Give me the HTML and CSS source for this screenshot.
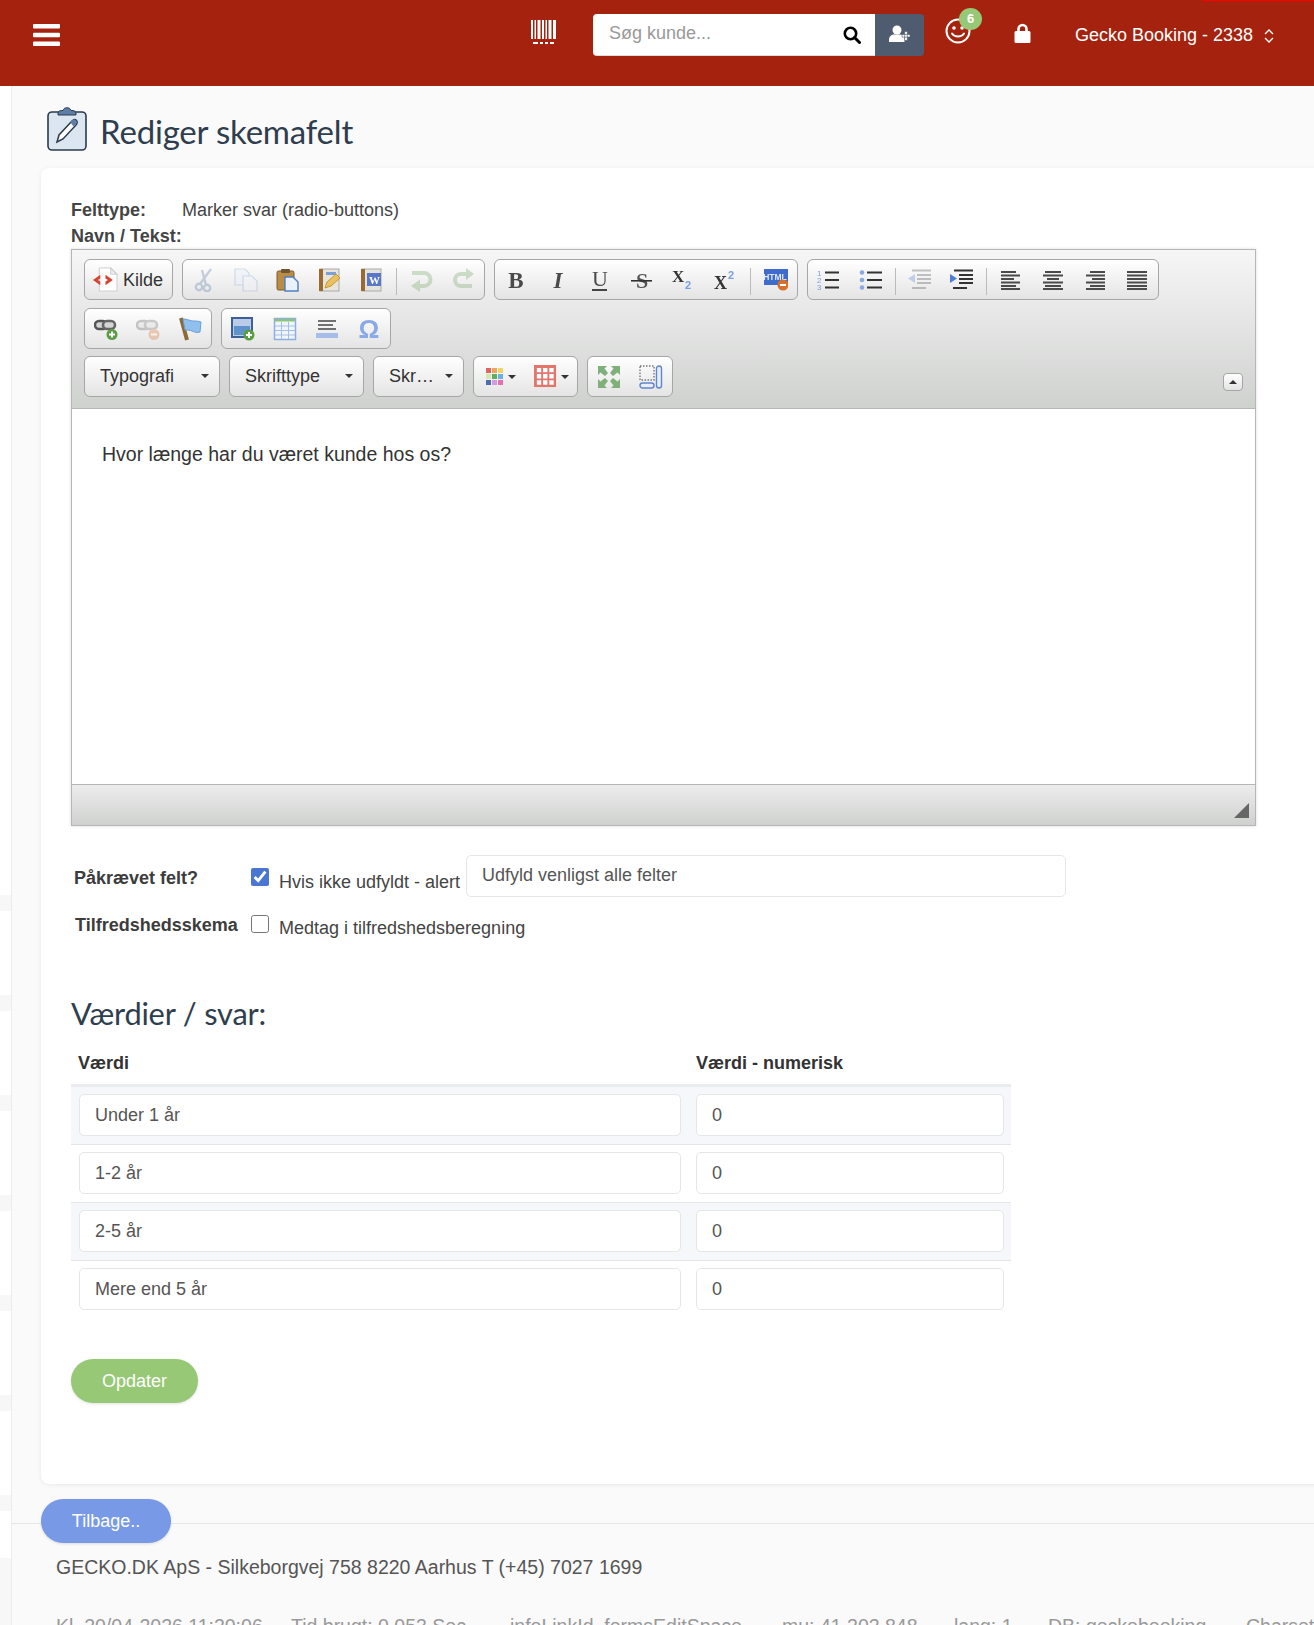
FILE: index.html
```html
<!DOCTYPE html>
<html lang="da">
<head>
<meta charset="utf-8">
<title>Rediger skemafelt</title>
<link rel="stylesheet" href="styles.css">
</head>
<body>
<svg class="sprite" xmlns="http://www.w3.org/2000/svg">
  <symbol id="source" viewBox="0 0 24 24"><path d="M6 1h11l6 6v16H6z" fill="#fff" stroke="#cfcfcf"/><path d="M17 1v6h6z" fill="#eee" stroke="#cfcfcf"/><path d="M7 7.500 0 12.500l7 5v-3.600L4.600 12.500 7 11z" fill="#d8432f"/><path d="M12 7.500l7 5-7 5v-3.600l2.400-1.400-2.400-1.500z" fill="#d8432f"/></symbol>
  <symbol id="cut" viewBox="0 0 24 24"><g fill="none" stroke="#56789f" stroke-width="2.400"><circle cx="7" cy="19" r="3.200"/><circle cx="15" cy="20" r="3.200"/><path d="M8 16 19 1M14 17 10 2"/></g></symbol>
  <symbol id="copy" viewBox="0 0 24 24"><path d="M1 1h10l4 4v12H1z" fill="#e6eefb" stroke="#7f9fd6" stroke-width="1.200"/><path d="M9 8h9l5 5v10H9z" fill="#eef4fd" stroke="#7f9fd6" stroke-width="1.200"/></symbol>
  <symbol id="paste" viewBox="0 0 24 24"><rect x="1" y="3" width="17" height="19" rx="1.500" fill="#b98d45" stroke="#7c5c28"/><rect x="5" y="1" width="9" height="4" rx="1" fill="#6f5630"/><path d="M9 9h8l5 5v9H9z" fill="#eaf1fb" stroke="#4f7cc4" stroke-width="1.400"/></symbol>
  <symbol id="pastetext" viewBox="0 0 24 24"><rect x="2" y="1" width="19" height="22" fill="#e8e4da" stroke="#aaa"/><rect x="1" y="1" width="4" height="22" fill="#9a6a32"/><path d="M8 4h10v3H8z" fill="#7da0d8"/><path d="M7 20 9 14l9-8 4 4-9 8z" fill="#e9c063" stroke="#c99a2a"/></symbol>
  <symbol id="pasteword" viewBox="0 0 24 24"><rect x="2" y="1" width="19" height="22" fill="#e4e2dc" stroke="#aaa"/><rect x="1" y="1" width="4" height="22" fill="#9a6a32"/><rect x="7" y="5" width="14" height="13" fill="#5a78c8"/><text x="9" y="15.500" font-family="Liberation Serif" font-weight="700" font-size="11" fill="#fff">W</text></symbol>
  <symbol id="undo" viewBox="0 0 24 24"><path d="M3 5h12a6.500 6.500 0 0 1 0 13h-5" fill="none" stroke="#6da35b" stroke-width="4"/><path d="M11 11.500 2 18l9 6z" fill="#6da35b"/></symbol>
  <symbol id="redo" viewBox="0 0 24 24"><path d="M21 6H10a6 6 0 0 0 0 12h11" fill="none" stroke="#6da35b" stroke-width="4"/><path d="M15 0l8 6-8 6z" fill="#6da35b"/></symbol>
  <symbol id="bold" viewBox="0 0 24 24"><text x="12" y="20" text-anchor="middle" font-family="Liberation Serif" font-weight="700" font-size="23" fill="#4a4a4a">B</text></symbol>
  <symbol id="italic" viewBox="0 0 24 24"><text x="12" y="20" text-anchor="middle" font-family="Liberation Serif" font-weight="700" font-style="italic" font-size="23" fill="#4a4a4a">I</text></symbol>
  <symbol id="underline" viewBox="0 0 24 24"><text x="12" y="18" text-anchor="middle" font-family="Liberation Serif" font-size="22" fill="#4a4a4a">U</text><rect x="4" y="21" width="15" height="2" fill="#444"/></symbol>
  <symbol id="strike" viewBox="0 0 24 24"><text x="12" y="20" text-anchor="middle" font-family="Liberation Serif" font-weight="700" font-size="22" fill="#555">S</text><rect x="1" y="12" width="21" height="1.600" fill="#333"/></symbol>
  <symbol id="sub" viewBox="0 0 24 24"><text x="0" y="14" font-family="Liberation Serif" font-weight="700" font-size="17" fill="#333">X</text><text x="13" y="21" font-family="Liberation Sans" font-weight="700" font-size="11" fill="#7a9fe0">2</text></symbol>
  <symbol id="sup" viewBox="0 0 24 24"><text x="0" y="21" font-family="Liberation Serif" font-weight="700" font-size="18" fill="#333">X</text><text x="14" y="11" font-family="Liberation Sans" font-weight="700" font-size="11" fill="#7a9fe0">2</text></symbol>
  <symbol id="html" viewBox="0 0 24 24"><rect y="1" width="24" height="16" fill="#3f6ccb"/><text x="11" y="12" text-anchor="middle" font-family="Liberation Sans" font-weight="700" font-size="8.500" fill="#dfe8fb">HTML</text><circle cx="19" cy="17" r="5.500" fill="#d9702a"/><rect x="16" y="16" width="6" height="2" fill="#fff"/></symbol>
  <symbol id="numlist" viewBox="0 0 24 24"><text x="0" y="8" font-family="Liberation Sans" font-size="8" fill="#7a9fe0">1</text><text x="0" y="15" font-family="Liberation Sans" font-size="8" fill="#7a9fe0">2</text><text x="0" y="22" font-family="Liberation Sans" font-size="8" fill="#7a9fe0">3</text><path d="M8 4.500h14M8 12h14M8 19.500h14" stroke="#333" stroke-width="1.800"/></symbol>
  <symbol id="bullist" viewBox="0 0 24 24"><circle cx="3" cy="4.500" r="2.300" fill="#8aa8e2"/><circle cx="3" cy="12" r="2.300" fill="#8aa8e2"/><circle cx="3" cy="19.500" r="2.300" fill="#8aa8e2"/><path d="M8 4.500h15M8 12h15M8 19.500h15" stroke="#333" stroke-width="1.800"/></symbol>
  <symbol id="outdent" viewBox="0 0 24 24"><path d="M4 2.500h19M9 7h14M9 11h14M9 15h14M4 20h14" stroke="#444" stroke-width="2"/><path d="M7 6v9L0 10.500z" fill="#4d7ed8"/></symbol>
  <symbol id="indent" viewBox="0 0 24 24"><path d="M4 2.500h19M9 7h14M9 11h14M9 15h14M3 20h14" stroke="#333" stroke-width="2"/><path d="M0 6v9l7-4.500z" fill="#4d7ed8"/></symbol>
  <symbol id="aleft" viewBox="0 0 24 24"><path d="M2 4h15M2 7.500h19M2 11h13M2 14.500h19M2 18h15M2 21h19" stroke="#4b4b4b" stroke-width="1.800"/></symbol>
  <symbol id="acenter" viewBox="0 0 24 24"><path d="M4 4h16M2 7.500h20M6 11h12M2 14.500h20M4 18h16M2 21h20" stroke="#4b4b4b" stroke-width="1.800"/></symbol>
  <symbol id="aright" viewBox="0 0 24 24"><path d="M7 4h15M3 7.500h19M9 11h13M3 14.500h19M7 18h15M3 21h19" stroke="#4b4b4b" stroke-width="1.800"/></symbol>
  <symbol id="ajust" viewBox="0 0 24 24"><path d="M2 4h20M2 7.500h20M2 11h20M2 14.500h20M2 18h20M2 21h20" stroke="#4b4b4b" stroke-width="1.800"/></symbol>
  <symbol id="link" viewBox="0 0 24 24"><rect x="1" y="4" width="12" height="8" rx="4" fill="#d5d5d5" stroke="#555" stroke-width="2.600"/><rect x="9" y="4" width="12" height="8" rx="4" fill="#d5d5d5" stroke="#666" stroke-width="2.600"/><circle cx="18" cy="17.500" r="5.500" fill="#5a9e41"/><path d="M15 17.500h6M18 14.500v6" stroke="#fff" stroke-width="2"/></symbol>
  <symbol id="unlink" viewBox="0 0 24 24"><rect x="1" y="4" width="12" height="8" rx="4" fill="#d5d5d5" stroke="#555" stroke-width="2.600"/><rect x="9" y="4" width="12" height="8" rx="4" fill="#d5d5d5" stroke="#666" stroke-width="2.600"/><circle cx="18" cy="17.500" r="5.500" fill="#d9702a"/><path d="M15 17.500h6" stroke="#fff" stroke-width="2"/></symbol>
  <symbol id="anchor" viewBox="0 0 24 24"><path d="M3 1l6 22" stroke="#8d6a35" stroke-width="4"/><path d="M5 2c5 0 7 2 10 2s5 0 8 1l-1 10c-3 1-6 0-8-1s-5-1-7-1z" fill="#8fc0ee" stroke="#6a9dd6"/></symbol>
  <symbol id="image" viewBox="0 0 24 24"><rect x="1" y="1" width="20" height="19" fill="#b9cdea" stroke="#3f5f96" stroke-width="2"/><rect x="3" y="9" width="16" height="9" fill="#5f93c9"/><circle cx="18" cy="18" r="5.500" fill="#5a9e41"/><path d="M15 18h6M18 15v6" stroke="#fff" stroke-width="2"/></symbol>
  <symbol id="table" viewBox="0 0 24 24"><rect x="1.500" y="1.500" width="21" height="21" fill="#f0f5fc" stroke="#8daee0" stroke-width="1.500"/><rect x="2" y="2" width="20" height="2.500" fill="#8ec47a"/><path d="M2 9h20M2 13.500h20M2 18h20M8.500 5v17M15.500 5v17" stroke="#a5bee6"/></symbol>
  <symbol id="hr" viewBox="0 0 24 24"><path d="M3 4h18M3 8h15M3 12h18" stroke="#444" stroke-width="1.700"/><rect x="1" y="16" width="22" height="5" fill="#a6bdea"/></symbol>
  <symbol id="omega" viewBox="0 0 24 24"><text x="12" y="21" text-anchor="middle" font-family="Liberation Sans" font-weight="700" font-size="26" fill="#8aa9e8">Ω</text></symbol>
  <symbol id="colors" viewBox="0 0 18 18"><path d="M0 0h5v5H0z" fill="#e2635b"/><path d="M6 0h5v5H6z" fill="#efa45b"/><path d="M12 0h5v5h-5z" fill="#ecd36b"/><path d="M0 6h5v5H0z" fill="#d5e6ae"/><path d="M6 6h5v5H6z" fill="#5fae5f"/><path d="M12 6h5v5h-5z" fill="#6ab0e8"/><path d="M0 12h5v5H0z" fill="#4f6cb0"/><path d="M6 12h5v5H6z" fill="#d79ae0"/><path d="M12 12h5v5h-5z" fill="#e870b0"/></symbol>
  <symbol id="grid" viewBox="0 0 24 24"><rect width="23" height="23" fill="#e5746b"/><path d="M3 3h4.500v4.500H3zM9.500 3H14v4.500H9.500zM16 3h4.500v4.500H16zM3 9.500h4.500V14H3zM9.500 9.500H14V14H9.500zM16 9.500h4.500V14H16zM3 16h4.500v4.500H3zM9.500 16H14v4.500H9.500zM16 16h4.500v4.500H16z" fill="#fff"/></symbol>
  <symbol id="maximize" viewBox="0 0 24 24"><g fill="#7fb07a"><path d="M1 1h9L7.500 3.500 11 8l-3 3-4.500-3.500L1 10z"/><path d="M23 1h-9l2.500 2.500L13 8l3 3 4.500-3.500L23 10z"/><path d="M1 23h9l-2.500-2.500L11 16l-3-3-4.500 3.500L1 14z"/><path d="M23 23h-9l2.500-2.500L13 16l3-3 4.500 3.500L23 14z"/></g></symbol>
  <symbol id="blocks" viewBox="0 0 24 24"><rect x="1" y="1" width="14" height="14" fill="none" stroke="#777" stroke-width="1.400" stroke-dasharray="1.500 1.500"/><rect x="17.500" y="1" width="5" height="22" rx="2.500" fill="#e8eefa" stroke="#5f86d0" stroke-width="1.400"/><rect x="1" y="18" width="14" height="5" rx="2.500" fill="#e8eefa" stroke="#5f86d0" stroke-width="1.400"/></symbol>
</svg>

<header class="topbar">
  <svg class="bars" viewBox="0 0 27 22"><rect width="27" height="4.500" rx="1" fill="#fff"/><rect y="8.700" width="27" height="4.500" rx="1" fill="#fff"/><rect y="17.500" width="27" height="4.500" rx="1" fill="#fff"/></svg>
  <svg class="barcode" viewBox="0 0 25 25"><path d="M0 0h2v19H0zM3.500 0h1.500v19H3.500zM6.500 0h3v19h-3zM11 0h2v19h-2zM14.500 0h1.500v19h-1.500zM17.500 0h3v19h-3zM22 0h3v19h-3zM2 22h5v2H2zM9 22h3v2H9zM14 22h3v2h-3zM19 22h4v2h-4z" fill="#fff"/></svg>
  <div class="search">
    <input class="search-input" type="text" placeholder="Søg kunde...">
    <svg class="search-icon" viewBox="0 0 18 18"><circle cx="7.500" cy="7.500" r="5.700" fill="none" stroke="#000" stroke-width="2.600"/><path d="M11.500 11.500 16.500 16.500" stroke="#000" stroke-width="3" stroke-linecap="round"/></svg>
    <button class="search-add" type="button"><svg class="user-plus" viewBox="0 0 22 18"><circle cx="8" cy="5" r="4.500" fill="#fff"/><path d="M0 17v-2.500c0-3 2.500-5 5-5h6c2.500 0 4 1.500 4.500 3.500v4z" fill="#fff"/><path d="M13 9.500h8v2.600h-8zM15.700 6.500h2.600v9h-2.600z" fill="#fff" stroke="#4f5b6e" stroke-width=".6"/></svg></button>
  </div>
  <div class="smile">
    <svg class="smile-face" viewBox="0 0 26 26"><circle cx="13" cy="13" r="11.500" fill="none" stroke="#fff" stroke-width="2"/><circle cx="9" cy="10" r="1.800" fill="#fff"/><circle cx="17" cy="10" r="1.800" fill="#fff"/><path d="M7 15.500c2.500 4 9.500 4 12 0" fill="none" stroke="#fff" stroke-width="2" stroke-linecap="round"/></svg>
    <span class="badge">6</span>
  </div>
  <svg class="lock" viewBox="0 0 16 20"><path d="M4 9V6a4 4 0 0 1 8 0v3" fill="none" stroke="#fff" stroke-width="2.600"/><rect y="8" width="16" height="12" rx="1.500" fill="#fff"/></svg>
  <span class="account">Gecko Booking - 2338</span>
  <svg class="updown" viewBox="0 0 12 16"><path d="M2 6l4-4 4 4M2 10l4 4 4-4" fill="none" stroke="#fff" stroke-width="1.300"/></svg>
  <span class="redline"></span>
</header>

<div class="app">
  <aside class="side">
    <div class="side-top"></div>
    <div class="side-item"></div>
    <div class="side-item"></div>
    <div class="side-item"></div>
    <div class="side-item"></div>
    <div class="side-item"></div>
    <div class="side-item"></div>
    <div class="side-item side-last"></div>
  </aside>
  <main class="main">
    <div class="title-row">
      <svg class="title-icon" viewBox="0 0 40 44"><rect x="1" y="5" width="38" height="38" rx="4" fill="#dce6f0" stroke="#2a3b4d" stroke-width="1.600"/><path d="M11 6c0-2 2-2.500 5-2.500C16.500 1.500 18 .8 20 .8s3.500.7 4 2.700c3 0 5 .5 5 2.500v2H11z" fill="#5e7fa5" stroke="#2a3b4d" stroke-width="1"/><path d="M10 35l2-7 13-14c1.500-1.500 3.500-1.500 4.500-.5s1 3-.5 4.500L16 32z" fill="#fff" stroke="#2a3b4d" stroke-width="1.500"/><path d="M23.500 15.500c1.500-3 3.500-3.500 5-2.500s1.500 3 0 4.500l-2 2z" fill="#5e7fa5"/></svg>
      <h1 class="title">Rediger skemafelt</h1>
    </div>

    <section class="card">
      <div class="info-row"><b class="info-label">Felttype:</b><span>Marker svar (radio-buttons)</span></div>
      <div class="info-row"><b>Navn / Tekst:</b></div>

      <div class="editor">
        <div class="toolbar">
          <div class="tb-row">
            <div class="group group-source"><svg class="ic ic-source"><use href="#source"/></svg><span>Kilde</span></div>
            <div class="group">
              <span class="btn"><svg class="ic off"><use href="#cut"/></svg></span>
              <span class="btn"><svg class="ic off"><use href="#copy"/></svg></span>
              <span class="btn"><svg class="ic"><use href="#paste"/></svg></span>
              <span class="btn"><svg class="ic"><use href="#pastetext"/></svg></span>
              <span class="btn"><svg class="ic"><use href="#pasteword"/></svg></span>
              <span class="sep"></span>
              <span class="btn"><svg class="ic off"><use href="#undo"/></svg></span>
              <span class="btn"><svg class="ic off"><use href="#redo"/></svg></span>
            </div>
            <div class="group">
              <span class="btn"><svg class="ic"><use href="#bold"/></svg></span>
              <span class="btn"><svg class="ic"><use href="#italic"/></svg></span>
              <span class="btn"><svg class="ic"><use href="#underline"/></svg></span>
              <span class="btn"><svg class="ic"><use href="#strike"/></svg></span>
              <span class="btn"><svg class="ic"><use href="#sub"/></svg></span>
              <span class="btn"><svg class="ic"><use href="#sup"/></svg></span>
              <span class="sep sep-8"></span>
              <span class="btn"><svg class="ic"><use href="#html"/></svg></span>
            </div>
            <div class="group">
              <span class="btn"><svg class="ic"><use href="#numlist"/></svg></span>
              <span class="btn"><svg class="ic"><use href="#bullist"/></svg></span>
              <span class="sep"></span>
              <span class="btn"><svg class="ic off"><use href="#outdent"/></svg></span>
              <span class="btn"><svg class="ic"><use href="#indent"/></svg></span>
              <span class="sep"></span>
              <span class="btn"><svg class="ic"><use href="#aleft"/></svg></span>
              <span class="btn"><svg class="ic"><use href="#acenter"/></svg></span>
              <span class="btn"><svg class="ic"><use href="#aright"/></svg></span>
              <span class="btn"><svg class="ic"><use href="#ajust"/></svg></span>
            </div>
          </div>
          <div class="tb-row tb-row-2">
            <div class="group">
              <span class="btn"><svg class="ic"><use href="#link"/></svg></span>
              <span class="btn"><svg class="ic off"><use href="#unlink"/></svg></span>
              <span class="btn"><svg class="ic"><use href="#anchor"/></svg></span>
            </div>
            <div class="group">
              <span class="btn"><svg class="ic"><use href="#image"/></svg></span>
              <span class="btn"><svg class="ic"><use href="#table"/></svg></span>
              <span class="btn"><svg class="ic"><use href="#hr"/></svg></span>
              <span class="btn"><svg class="ic"><use href="#omega"/></svg></span>
            </div>
          </div>
          <div class="tb-row tb-row-3">
            <div class="group combo combo-1"><span>Typografi</span><i class="caret"></i></div>
            <div class="group combo combo-2"><span>Skrifttype</span><i class="caret"></i></div>
            <div class="group combo combo-3"><span>Skr…</span><i class="caret"></i></div>
            <div class="group group-colors">
              <span class="color-btn"><svg class="ic ic-small"><use href="#colors"/></svg><i class="caret"></i></span>
              <span class="color-btn"><svg class="ic ic-grid"><use href="#grid"/></svg><i class="caret"></i></span>
            </div>
            <div class="group">
              <span class="btn"><svg class="ic"><use href="#maximize"/></svg></span>
              <span class="btn"><svg class="ic"><use href="#blocks"/></svg></span>
            </div>
            <span class="collapse"><i class="caret caret-up"></i></span>
          </div>
        </div>
        <div class="content"><p class="content-text">Hvor længe har du været kunde hos os?</p></div>
        <div class="statusbar"><svg class="resize" viewBox="0 0 15 15"><path d="M15 0v15H0z" fill="#666"/></svg></div>
      </div>

      <div class="opt-row">
        <b class="opt-label">Påkrævet felt?</b>
        <input class="check" type="checkbox" checked>
        <span class="opt-text">Hvis ikke udfyldt - alert</span>
        <input class="field field-alert" type="text" value="Udfyld venligst alle felter">
      </div>
      <div class="opt-row opt-row-2">
        <b class="opt-label opt-label-2">Tilfredshedsskema</b>
        <input class="check" type="checkbox">
        <span class="opt-text">Medtag i tilfredshedsberegning</span>
      </div>

      <h2 class="subtitle">Værdier / svar:</h2>
      <table class="values">
        <thead><tr><th class="col-a">Værdi</th><th>Værdi - numerisk</th></tr></thead>
        <tbody>
          <tr><td><input class="field" type="text" value="Under 1 år"></td><td><input class="field" type="text" value="0"></td></tr>
          <tr><td><input class="field" type="text" value="1-2 år"></td><td><input class="field" type="text" value="0"></td></tr>
          <tr><td><input class="field" type="text" value="2-5 år"></td><td><input class="field" type="text" value="0"></td></tr>
          <tr><td><input class="field" type="text" value="Mere end 5 år"></td><td><input class="field" type="text" value="0"></td></tr>
        </tbody>
      </table>
      <button class="pill pill-green" type="button">Opdater</button>
    </section>

    <button class="pill pill-blue" type="button">Tilbage..</button>
    <footer class="footer">
      <p class="company">GECKO.DK ApS - Silkeborgvej 758 8220 Aarhus T (+45) 7027 1699</p>
      <p class="debug"><span>Kl. 20/04-2026 11:20:06</span><span>Tid brugt: 0.053 Sec</span><span>infoLinkId_formsEditSpace</span><span>mu: 41.202.848</span><span>lang: 1</span><span>DB: geckobooking</span><span>Charset</span></p>
    </footer>
  </main>
</div>
</body>
</html>
```
FILE: styles.css
```css
* { box-sizing: border-box; }
html, body { margin: 0; height: 1625px; overflow: hidden; }
body { font: 18px/26px "Liberation Sans", Arial, sans-serif; color: #444; background: #fafafa; }
.sprite { display: none; }

.topbar { position: relative; display: flex; align-items: flex-start; height: 86px; padding: 14px 0 0 33px; background: #a5230e; color: #fff; }
.bars { width: 27px; height: 22px; margin-top: 10px; }
.barcode { width: 25px; height: 25px; margin: 6px 0 0 471px; }
.search { display: flex; position: relative; margin-left: 37px; }
.search-input { width: 282px; height: 42px; padding: 0 16px 2px; border: 0; border-bottom: 1px solid #ddd; border-radius: 4px 0 0 4px; font: 18px "Liberation Sans", Arial, sans-serif; outline: 0; }
.search-input::placeholder { color: #999; opacity: 1; }
.search-icon { position: absolute; left: 250px; top: 12px; width: 18px; height: 18px; }
.search-add { display: flex; align-items: center; justify-content: center; width: 49px; height: 42px; padding: 0 0 3px; border: 0; border-radius: 0 4px 4px 0; background: #4f5b6e; }
.user-plus { width: 22px; height: 18px; }
.smile { position: relative; width: 26px; height: 26px; margin: 4px 0 0 21px; }
.smile-face { display: block; width: 26px; height: 26px; }
.badge { position: absolute; left: 14px; top: -10px; width: 23px; height: 22px; border-radius: 50%; background: #97c875; color: #fff; font-size: 13px; font-weight: 700; line-height: 22px; text-align: center; }
.lock { width: 17px; height: 20px; margin: 9px 0 0 43px; }
.account { margin: 8px 0 0 44px; line-height: 26px; white-space: nowrap; }
.updown { width: 12px; height: 16px; margin: 14px 0 0 10px; }
.redline { position: absolute; top: 0; right: 0; width: 112px; height: 1px; background: #f00; }

.app { display: flex; height: 1539px; }
.side { flex: none; width: 11px; background: #f7f7f7; }
.side-top { height: 809px; background: #fff; }
.side-item { height: 100px; border-top: 16px solid #f7f7f7; background: #fff; }
.side-last { height: 63px; }
.main { flex: 1; min-width: 0; border-left: 1px solid #ececec; }

.title-row { display: flex; align-items: flex-start; height: 82px; padding: 21px 0 0 35px; }
.title-icon { flex: none; width: 40px; height: 44px; }
.title { margin: 4px 0 0 13px; font: 400 33px/40px Lato, sans-serif; color: #2f3e4e; letter-spacing: -.2px; }

.card { position: relative; width: 1320px; height: 1316px; margin-left: 29px; padding: 29px 30px 0; background: #fff; border-radius: 8px; box-shadow: 0 1px 5px rgba(0,0,0,.07); }
.info-row { display: flex; height: 26px; }
.info-label { width: 111px; }

.editor { width: 1185px; height: 577px; border: 1px solid #b6b6b6; box-shadow: 0 0 3px rgba(0,0,0,.15); display: flex; flex-direction: column; }
.toolbar { flex: none; height: 159px; padding: 9px 0 0 12px; background: linear-gradient(#f6f6f6, #cfd1cf); border-bottom: 1px solid #b6b6b6; }
.tb-row { display: flex; gap: 9px; height: 41px; }
.tb-row-2 { margin-top: 8px; }
.tb-row-3 { margin-top: 7px; }
.group { display: flex; align-items: center; height: 41px; border: 1px solid #a6a6a6; border-radius: 6px; background: linear-gradient(#fff, #e4e4e4); color: #333; font-size: 18px; }
.group-source { width: 89px; padding-left: 8px; gap: 5px; }
.btn { display: flex; align-items: center; justify-content: center; width: 42px; height: 100%; }
.ic { display: block; width: 24px; height: 24px; filter: blur(.3px); }
.off { opacity: .3; }
.ic-source { width: 25px; height: 25px; }
.ic-small { width: 18px; height: 18px; }
.ic-grid { width: 23px; height: 23px; }
.sep { flex: none; position: relative; width: 7px; height: 100%; }
.sep::after { content: ""; position: absolute; left: 3px; top: 8px; bottom: 4px; width: 1px; background: #bbb; }
.sep-8 { width: 8px; }
.combo { justify-content: space-between; padding: 0 10px 2px 15px; }
.combo-1 { width: 136px; }
.combo-2 { width: 135px; }
.combo-3 { width: 91px; }
.caret { flex: none; width: 0; height: 0; border: 4px solid transparent; border-top-color: #333; border-bottom: 0; }
.group-colors { width: 105px; padding-left: 12px; gap: 18px; }
.color-btn { display: flex; align-items: center; gap: 4px; }
.collapse { display: flex; align-items: center; justify-content: center; width: 20px; height: 18px; margin: 17px 12px 0 auto; border: 1px solid #a6a6a6; border-radius: 4px; background: linear-gradient(#fff, #e4e4e4); }
.caret-up { border-top: 0; border-bottom: 4px solid #333; }
.content { flex: 1; padding: 32px 30px; background: #fff; }
.content-text { margin: 0; color: #333; font-size: 19.5px; }
.statusbar { flex: none; display: flex; justify-content: flex-end; align-items: flex-start; height: 41px; padding: 18px 6px 0 0; background: linear-gradient(#ececec, #cfd1cf); border-top: 1px solid #b6b6b6; }
.resize { width: 15px; height: 15px; }

.opt-row { display: flex; align-items: flex-start; margin-top: 29px; }
.opt-label { width: 177px; margin: 10px 0 0 3px; color: #3c3c3c; }
.check { flex: none; width: 18px; height: 18px; margin: 13px 10px 0 0; accent-color: #4a76d1; }
.opt-text { width: 187px; margin-top: 14px; white-space: nowrap; }
.field { display: block; width: 100%; height: 42px; padding: 2px 15px 0; border: 1px solid #e5e6e7; border-radius: 5px; background: #fff; color: #555; font: 18px "Liberation Sans", Arial, sans-serif; outline: 0; }
.field-alert { width: 600px; padding: 0 15px 2px; }
.opt-row-2 { margin-top: 18px; }
.opt-label-2 { margin: -3px 0 0 4px; width: 176px; }
.opt-row-2 .check { margin-top: 0; }
.opt-row-2 .opt-text { margin-top: 0; }

.subtitle { margin: 53px 0 0; font: 400 30.8px/40px Lato, sans-serif; color: #2f3e4e; letter-spacing: -.2px; }
.values { width: 940px; margin-top: 10px; border-collapse: collapse; table-layout: fixed; }
.values th { height: 41px; padding: 0 8px 1px; border-bottom: 3px solid #eaecef; text-align: left; color: #333; font-weight: 700; }
.values .col-a { width: 617px; padding-left: 7px; }
.values td { padding: 7px 7px 8px 8px; border-bottom: 1px solid #e3e5e8; }
.values tbody tr:nth-child(odd) { background: #f5f7fa; }
.values tbody tr:last-child td { border-bottom: 0; }

.pill { display: block; height: 44px; border: 0; border-radius: 22px; color: #fff; font: 18px "Liberation Sans", Arial, sans-serif; box-shadow: 0 1px 3px rgba(0,0,0,.12); }
.pill-green { width: 127px; margin-top: 41px; padding-top: 2px; background: #97c875; }
.pill-blue { position: relative; z-index: 1; width: 130px; margin: 15px 0 -20px 29px; background: #7799e6; }
.footer { border-top: 1px solid #e6e6e6; padding: 30px 0 0 44px; }
.company { margin: 0; font-size: 19.5px; white-space: nowrap; color: #555; }
.debug { display: grid; grid-template-columns: 235px 219px 272px 172px 94px 198px auto; margin: 33px 0 0; font-size: 19.5px; color: #999; white-space: nowrap; }
```
